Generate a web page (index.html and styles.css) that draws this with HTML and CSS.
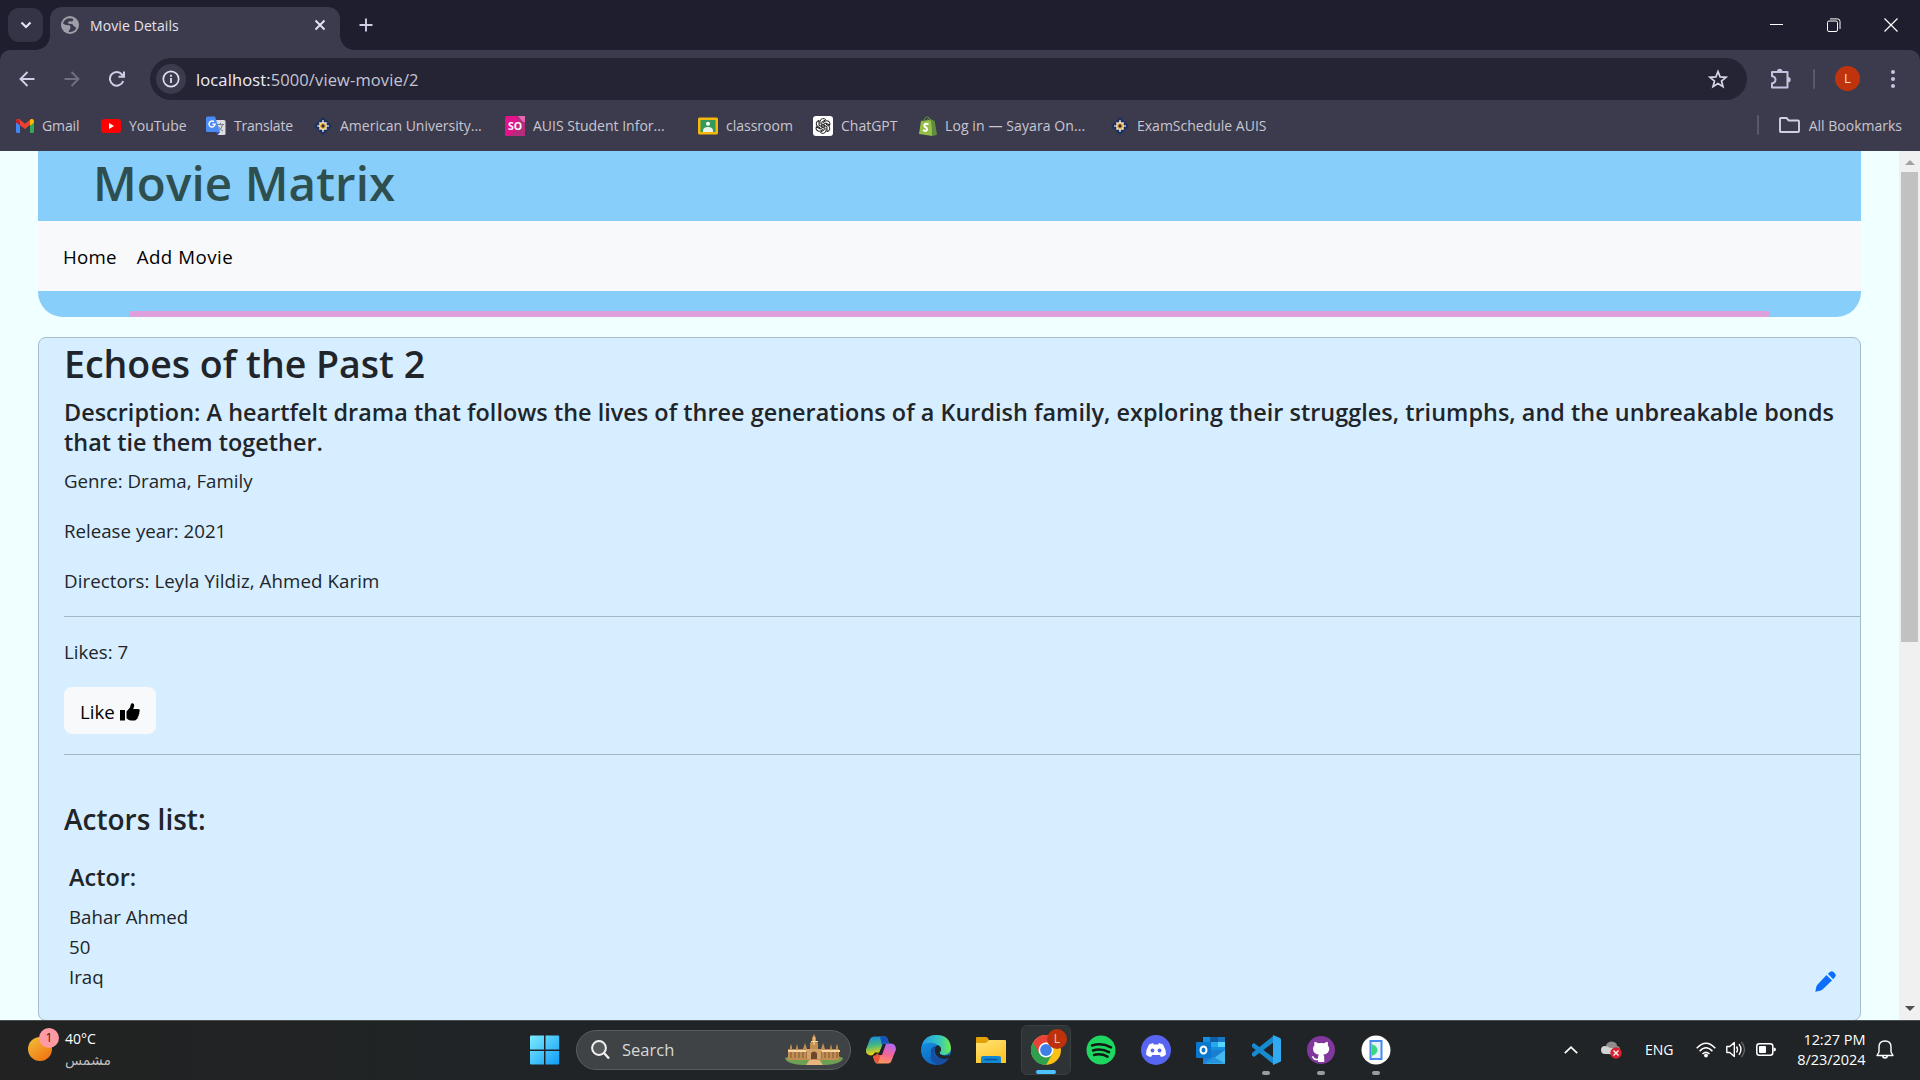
FILE: index.html
```html
<!DOCTYPE html>
<html lang="en">
<head>
<meta charset="utf-8">
<title>Movie Details</title>
<link rel="stylesheet" href="styles.css">
</head>
<body>
<div class="screen">
  <header class="tabstrip">
    <div class="tab-menu"><svg width="12" height="8" viewBox="0 0 12 8"><path d="M1.500 1.500 6 6l4.500-4.500" fill="none" stroke="#e6e4f0" stroke-width="2.200"/></svg></div>
    <div class="tab">
      <svg class="globe" width="18" height="18" viewBox="0 0 18 18"><circle cx="9" cy="9" r="9" fill="#9d9fa8"/><path d="M8 2.200C5 2.500 2.600 4.800 2 7.500L4.500 9l4 .2 1.200 2-1 2.200-1.200 2.500c3.500.5 6.500-1 7.800-4l-2.500-1.800-1.600-2.100-3.500-.2-.9-1.600 1.500-1 2.700.3 1.500-1.500-1-1.500z" fill="#3c3b4d"/><path d="M9 6.500 13 7l2.500-1.500" stroke="#9d9fa8" fill="none"/></svg>
      <span class="tab-title">Movie Details</span>
      <svg class="tab-close" width="12" height="12" viewBox="0 0 12 12"><path d="m1.500 1.500 9 9m0-9-9 9" stroke="#e6e4f0" stroke-width="1.900"/></svg>
    </div>
    <svg class="new-tab" width="14" height="14" viewBox="0 0 14 14"><path d="M7 .5v13M.5 7h13" stroke="#d1cde6" stroke-width="1.900"/></svg>
    <div class="window-controls">
      <svg width="14" height="14" viewBox="0 0 14 14"><path d="M0 6.500h13" stroke="#fff"/></svg>
      <svg width="14" height="14" viewBox="0 0 14 14"><rect x=".5" y="3" width="10" height="10.500" rx="1.500" fill="none" stroke="#fff"/><path d="M3 .9h7.500A2.500 2.500 0 0 1 13 3.400V11" fill="none" stroke="#fff"/></svg>
      <svg width="14" height="14" viewBox="0 0 14 14"><path d="m.5.500 13 13m0-13-13 13" stroke="#fff" stroke-width="1.200"/></svg>
    </div>
  </header>

  <div class="toolbar">
    <svg width="16" height="16" viewBox="0 0 16 16"><path d="M15.500 8H2M8.500 1 1.500 8l7 7" fill="none" stroke="#d1cde6" stroke-width="1.900"/></svg>
    <svg width="16" height="16" viewBox="0 0 16 16"><path d="M.5 8H14M7.500 1l7 7-7 7" fill="none" stroke="#716f83" stroke-width="1.900"/></svg>
    <svg width="16" height="16" viewBox="0 0 16 16"><path d="M14.200 10A6.800 6.800 0 1 1 13 3.500l2 2.200M15 .5v5.300H9.500" fill="none" stroke="#d1cde6" stroke-width="2"/></svg>
    <div class="omnibox">
      <div class="site-info"><svg width="18" height="18" viewBox="0 0 18 18"><circle cx="9" cy="9" r="7.700" fill="none" stroke="#dfdcec" stroke-width="1.700"/><path d="M9 8v5M9 4.800v1.900" stroke="#dfdcec" stroke-width="1.800"/></svg></div>
      <span class="url"><b>localhost:</b>5000/view-movie/2</span>
      <svg class="star" width="20" height="20" viewBox="0 0 20 20"><path d="m10 2.500 2.100 5.400 5.900.4-4.500 3.700 1.500 5.700-5-3.200-5 3.200L6.500 12 2 8.300l5.900-.4z" fill="none" stroke="#d8d5e5" stroke-width="1.700"/></svg>
    </div>
    <svg class="puzzle" width="22" height="22" viewBox="0 0 22 22"><path d="M2 4h15.500v15.500H2v-4.200a3.500 3.500 0 0 0 0-7z" fill="none" stroke="#c7c2df" stroke-width="2" stroke-linejoin="round"/><path d="M7 3.500a2.700 2.700 0 0 1 5.400 0zM18 9a2.700 2.700 0 0 1 0 5.400z" fill="#c7c2df"/></svg>
    <span class="rule"></span>
    <span class="avatar">L</span>
    <svg width="4" height="18" viewBox="0 0 4 18"><g fill="#c7c2df"><circle cx="2" cy="2" r="2"/><circle cx="2" cy="9" r="2"/><circle cx="2" cy="16" r="2"/></g></svg>
  </div>

  <nav class="bookmarks">
    <div class="bookmark gmail"><svg width="18" height="20" viewBox="0 0 18 20"><path d="M0 5.500h4V17H1.200Q0 17 0 15.800z" fill="#4285f4"/><path d="M14 5.500h4v10.300q0 1.200-1.200 1.200H14z" fill="#34a853"/><path d="M0 5V4.500Q0 3 1.500 3H3l6 4.800L15 3v5l-6 5-5-3.800z" fill="#ea4335"/><path d="M14 4l1.300-1Q18 2.800 18 5v1.500l-4 3.200z" fill="#fbbc04"/><path d="M0 5q0-1.500 1.500-2L4 5v4.500L0 6.500z" fill="#c5221f"/></svg><span>Gmail</span></div>
    <div class="bookmark youtube"><svg width="20" height="20" viewBox="0 0 20 20"><rect y="3" width="20" height="14" rx="3.500" fill="#f00"/><path d="m8 7 5 3-5 3z" fill="#fff"/></svg><span>YouTube</span></div>
    <div class="bookmark translate"><svg width="20" height="20" viewBox="0 0 20 20"><path d="M9 4h9q1.500 0 1.500 1.500v12q0 1.500-1.500 1.500h-6z" fill="#dcdde0"/><path d="M10 16h4l-2.500 3.500z" fill="#3c56b0"/><path d="M11 8.500h7M14.500 7v1.500m2 0q-.5 4-4 6.500m0-4.500q1.500 3.500 4.500 4.500" stroke="#75818a" fill="none"/><path d="M1.500.5h7.500l5 15.500H1.500Q0 16 0 14.500V2Q0 .5 1.500.5z" fill="#4b8bf5"/><path d="M8 5.800a3 3 0 1 0 1 2.500H6.500" fill="none" stroke="#fff" stroke-width="1.400"/></svg><span>Translate</span></div>
    <div class="bookmark american"><svg width="18" height="18" viewBox="0 0 18 18"><path d="m9 0 9 9-9 9-9-9z" fill="#1b2f5c"/><path d="M9 3V15M3 9h12M5.300 5.300l7.400 7.400m0-7.400-7.400 7.400" stroke="#b9c3d6" stroke-width="1.700"/><circle cx="9" cy="9" r="3.900" fill="#f4e3bd"/><circle cx="9" cy="9" r="2.300" fill="#2b2a38" stroke="#f0b03c" stroke-width="1.300"/></svg><span>American University...</span></div>
    <div class="bookmark auis"><svg width="20" height="20" viewBox="0 0 20 20"><rect width="20" height="20" rx="1.500" fill="#e4128b"/><path d="M12 0h8v20H4l9-8z" fill="#b52c7d"/><path d="m13 0 5 6h2V0z" fill="#e468ae"/><text x="10" y="14.200" text-anchor="middle" class="so">SO</text></svg><span>AUIS Student Infor...</span></div>
    <div class="bookmark classroom"><svg width="20" height="20" viewBox="0 0 20 20"><rect y="1.500" width="20" height="17" rx="1.500" fill="#f6b90b"/><rect x="2.500" y="4" width="15" height="12" fill="#34995a"/><circle cx="10" cy="7.800" r="2" fill="#fff"/><path d="M5 14.500q0-3.500 5-3.500t5 3.500V16H5z" fill="#e8f3ea"/></svg><span>classroom</span></div>
    <div class="bookmark chatgpt"><svg width="20" height="20" viewBox="0 0 20 20"><rect width="20" height="20" rx="3" fill="#fff"/><g fill="none" stroke="#222" stroke-width="1"><path id="petal" d="M7 8.300V5.500a3.200 3.200 0 0 1 5.700-1.700L8.800 6.100v5.200"/><use href="#petal" transform="rotate(60 10 10)"/><use href="#petal" transform="rotate(120 10 10)"/><use href="#petal" transform="rotate(180 10 10)"/><use href="#petal" transform="rotate(240 10 10)"/><use href="#petal" transform="rotate(300 10 10)"/></g></svg><span>ChatGPT</span></div>
    <div class="bookmark sayara"><svg width="18" height="20" viewBox="0 0 18 20"><path d="M2 5 12.500 3.500 13.500 20 0 18z" fill="#95bf47"/><path d="m12.500 3.500 3.200 1.500L18 18.800 13.500 20z" fill="#5e8e3e"/><path d="M4.500 6Q5.500.7 8.500.8 11 1 11 5M7.500 5Q9 .8 11.500 3.500" fill="none" stroke="#5e8e3e"/><path d="M9.500 8.200Q5.500 7 5.300 9.500c0 2 3 1.800 2.800 3.800-.1 2-2.500 2-4 .7" fill="none" stroke="#fff" stroke-width="2"/></svg><span>Log in — Sayara On...</span></div>
    <div class="bookmark exam"><svg width="18" height="18" viewBox="0 0 18 18"><path d="m9 0 9 9-9 9-9-9z" fill="#1b2f5c"/><path d="M9 3V15M3 9h12M5.300 5.300l7.400 7.400m0-7.400-7.400 7.400" stroke="#b9c3d6" stroke-width="1.700"/><circle cx="9" cy="9" r="3.900" fill="#f4e3bd"/><circle cx="9" cy="9" r="2.300" fill="#2b2a38" stroke="#f0b03c" stroke-width="1.300"/></svg><span>ExamSchedule AUIS</span></div>
    <div class="all-bookmarks"><span class="rule"></span><svg width="21" height="16" viewBox="0 0 21 16"><path d="M1 2q0-1 1-1h5.500l2.300 2.500H19q1 0 1 1V14q0 1-1 1H2q-1 0-1-1z" fill="none" stroke="#d2cfe0" stroke-width="1.900"/></svg><span class="label">All Bookmarks</span></div>
  </nav>

  <div class="viewport">
    <main class="page">
      <div class="banner">
        <h1>Movie Matrix</h1>
        <div class="menu"><span class="home">Home</span><span class="add">Add Movie</span></div>
        <div class="accent"></div>
      </div>
      <section class="card">
        <h2>Echoes of the Past 2</h2>
        <h5 class="description">Description: A heartfelt drama that follows the lives of three generations of a Kurdish family, exploring their struggles, triumphs, and the unbreakable bonds<br>that tie them together.</h5>
        <p>Genre: Drama, Family</p>
        <p>Release year: 2021</p>
        <p class="directors">Directors: Leyla Yildiz, Ahmed Karim</p>
        <hr>
        <p>Likes: 7</p>
        <button class="like">Like <svg width="20" height="18" viewBox="0 0 20 18"><path d="M0 7h5v10.500H0z"/><path d="M6.500 8.500 10 4.500l.8-3Q11.200 0 12.700.2q1.800.5 1.500 2.800l-1 3h5q1.800.2 1.600 2-.1.700-.6 1 .8 1.500-.5 2.500.5 1.500-.8 2.300.2 1.700-1.200 2.300-.3 1.300-2 1.400h-3.500q-1.800 0-3.200-1L6.500 15.200z"/></svg></button>
        <hr>
        <h4>Actors list:</h4>
        <div class="actor">
          <div><h5>Actor:</h5><div>Bahar Ahmed</div><div>50</div><div>Iraq</div></div>
          <svg class="pencil" width="21" height="21" viewBox="0 0 21 21"><path d="M11.500 4 17 9.500 7.500 18.500Q6.500 19.500 5 19.800L.3 20.700 1.300 16Q1.500 14.700 2.600 13.400zM12.800 2.800 15 1q1.700-1.500 3.500 0l1.500 1.500q1.600 1.800 0 3.500l-1.800 2.200z" fill="#0d6efd"/></svg>
        </div>
      </section>
    </main>
    <div class="scrollbar">
      <svg width="10" height="5" viewBox="0 0 10 5"><path d="m0 5 5-5 5 5z" fill="#a3a3a3"/></svg>
      <div class="thumb"></div>
      <svg width="10" height="5" viewBox="0 0 10 5"><path d="m0 0 5 5 5-5z" fill="#505050"/></svg>
    </div>
  </div>

  <footer class="taskbar">
    <div class="weather">
      <div class="sun"><span class="count">1</span></div>
      <div class="weather-text"><span>40°C</span><span class="arabic" lang="ar" dir="rtl">مشمس</span></div>
    </div>
    <div class="apps">
      <div class="app windows"><svg width="30" height="30" viewBox="0 0 30 30"><defs><linearGradient id="win" x2="1" y2="1" gradientUnits="objectBoundingBox"><stop stop-color="#7cecff"/><stop offset="1" stop-color="#119bf5"/></linearGradient></defs><path d="M0 1.500Q0 .5 1 .5h13v14H0zM15.500.5h12.700q1 0 1 1v13H15.500zM0 16h14v13.500H1q-1 0-1-1zM15.500 16h13.700v12.500q0 1-1 1H15.500z" fill="url(#win)"/></svg></div>
      <div class="search">
        <svg width="19" height="20" viewBox="0 0 19 20"><circle cx="8" cy="8" r="6.900" fill="#555a5d" stroke="#f3f3f3" stroke-width="2"/><path d="m13 13 5 5.500" stroke="#f3f3f3" stroke-width="2.300"/></svg>
        <span>Search</span>
        <svg class="palace" width="58" height="32" viewBox="0 0 58 32"><path d="M0 24q8-4 29-3 21-1 29 3-1 6-18 7H18Q1 30 0 24z" fill="#6ca054"/><path d="m25 25-4 6h17l-4-6z" fill="#e6b580"/><path d="M3 15h2v-2l1-3 1 3v2h4v-1l1-4 1 4v1h5l2-6 2 6h3V9l2-2V4l2-4 2 4v3l2 2v6h3l2-6 2 6h5v-1l1-4 1 4v1h4v-2l1-3 1 3v2h1v11H3z" fill="#c38e52"/><path d="M3 16h52v2H3zM23 15h13v2H23zM26 7h7v1h-7z" fill="#f3d4a1"/><path d="M6 18v6m4-6v6m4-6v6m4-6v6m4-7v8m14-8v8m4-7v6m4-6v6m4-6v6m4-6v6" stroke="#8d643f" stroke-width="1.300"/><path d="M22 15h14v10H22z" fill="#d3a36a"/><path d="M26 25v-6q3-3 6 0v6z" fill="#6c472d"/><path d="M29 3v8" stroke="#ffe3a4"/></svg>
      </div>
      <div class="app"><svg width="30" height="28" viewBox="0 0 30 28"><defs><linearGradient id="ca" x2=".2" y2="1"><stop stop-color="#1686e8"/><stop offset=".5" stop-color="#42b785"/><stop offset="1" stop-color="#ffd500"/></linearGradient><linearGradient id="cb" x1=".6" x2=".3" y2="1"><stop stop-color="#b368ee"/><stop offset=".5" stop-color="#f66597"/><stop offset="1" stop-color="#ff9b55"/></linearGradient></defs><path d="M8 .5h11q2 .3 3 4l1 3h-4q-2 0-3 3l-2 6H9q-2 3-4 3-6-1-5-6L4 3Q5 .5 8 .5z" fill="url(#ca)"/><path d="M22 27.500H11q-2-.3-3-4l-1-3h3q3 0 4-3l3-8q1-2 3-2h5q5 .5 5 6l-4 10q-1 4-4 4z" fill="url(#cb)"/><path d="M14 .5h5q2 .5 3 4l1 3h-4q-2 0-3 2z" fill="#1750c3"/><path d="m7 20 1 3q1 4 4 4.500l3-10h-4q-1 2-4 2.500z" fill="#e8573c"/><path d="M17 8h3l-4 11h-4z" fill="#20242a"/></svg></div>
      <div class="app"><svg width="30" height="30" viewBox="0 0 30 30"><defs><linearGradient id="ea"><stop stop-color="#219be8"/><stop offset=".6" stop-color="#38c7bf"/><stop offset="1" stop-color="#71eb4c"/></linearGradient><linearGradient id="eb" y2="1" x2=".6"><stop stop-color="#1899e9"/><stop offset="1" stop-color="#0a61bd"/></linearGradient></defs><circle cx="15" cy="15" r="15" fill="url(#eb)"/><path d="M1 10Q4 0 15 0q14 0 15 13 0 6-7 7-5 0-5-3 3-3 0-6-7-6-17-1z" fill="url(#ea)"/><path d="M10 20Q8 12 15 11q-4 5 0 10 5 5 13 2-4 7-11 7-9-4-7-10z" fill="#164ea4"/><path d="M15 11q3-2 5 2v3q-2 1-1 3 4 3 9 1l2 2-2 1q-8 3-13-3-3-5 0-9z" fill="#20262b"/></svg></div>
      <div class="app"><svg width="30" height="28" viewBox="0 0 30 28"><path d="M0 2Q0 1 1 1h9q2 0 3 3l-2 5H0z" fill="#e3a108"/><defs><linearGradient id="fo" y2="1" x2=".5"><stop stop-color="#ffe277"/><stop offset="1" stop-color="#ffc629"/></linearGradient></defs><path d="M0 7h10l3-3h16q1 0 1 1v22H0z" fill="url(#fo)"/><path d="M5 27v-5q0-2 2-2h16q2 0 2 2v5z" fill="#1287d3"/><path d="M8.500 23.500h13" stroke="#075397" stroke-width="1.500"/></svg></div>
      <div class="app active"><svg width="30" height="30" viewBox="0 0 30 30"><circle cx="15" cy="15" r="15" fill="#fbc116"/><path d="M15 15 2 7.500A15 15 0 0 0 15 30l6.500-11.200z" fill="#2da14e"/><path d="M2 7.500A15 15 0 0 1 28 7.500H15L8.500 19z" fill="#e8433a"/><circle cx="15" cy="15" r="7.500" fill="#fff"/><circle cx="15" cy="15" r="5.900" fill="#3f7fe8"/></svg><span class="profile">L</span></div>
      <div class="app"><svg width="30" height="30" viewBox="0 0 30 30"><circle cx="15" cy="15" r="14.500" fill="#1ed760"/><path d="M6 10.500q10-3 19 1.800M7 15.500q8-2.500 16 1.700M8 20q7-2 13.500 1.600" fill="none" stroke="#101913" stroke-width="2.500" stroke-linecap="round"/></svg></div>
      <div class="app"><svg width="30" height="30" viewBox="0 0 30 30"><circle cx="15" cy="15" r="15" fill="#5865f2"/><path d="m12 8 .8 1.500h4.400L18 8l4 1.500q3 5 3 10-2 2-5 2.500l-1.200-2h-7.600L10 22q-3-.5-5-2.500 0-5 3-10z" fill="#fff"/><ellipse cx="11.500" cy="15.500" rx="1.900" ry="2.100" fill="#5865f2"/><ellipse cx="18.500" cy="15.500" rx="1.900" ry="2.100" fill="#5865f2"/></svg></div>
      <div class="app"><svg width="30" height="28" viewBox="0 0 30 28"><path d="M7 1h22v16H7z" fill="#1490df"/><path d="M14 1h8v5h-8z" fill="#0f5fa7"/><path d="M22 1h7v5h-7z" fill="#1777c5"/><path d="M22 6h7v5h-7z" fill="#56d7ff"/><path d="M14 6h8v5h-8z" fill="#29a9ec"/><path d="M7 14h22v13q0 1-1 1H7z" fill="#1a7fd1"/><path d="M29 14v13q0 1-1 1H10z" fill="#45b9ef"/><path d="m18 21 11 6.500H7z" fill="#2495dd"/><rect y="6" width="15" height="16" rx="1" fill="#0877cd"/><ellipse cx="7.500" cy="14" rx="3" ry="3.500" fill="none" stroke="#fff" stroke-width="2"/></svg></div>
      <div class="app running"><svg width="30" height="30" viewBox="0 0 30 30"><path d="M1 9.500 3 8l20 15v6.500L1 12z" fill="#168bd2"/><path d="M1 20.500 3 22 23 7V.5L1 18z" fill="#168bd2"/><path d="M22 0 29 3q1 .5 1 1.500v21q0 1-1 1.500l-7 3z" fill="#31aaf2"/></svg></div>
      <div class="app running"><svg width="28" height="28" viewBox="0 0 28 28"><circle cx="14" cy="14" r="14" fill="#81379b"/><path d="M11 23.300q-4.200.9-5.500-3" fill="none" stroke="#fff" stroke-width="1.500"/><path d="M11 26v-5q0-1.500 1-2.200-6-.8-6-6 0-2 1.400-3.500-.5-1.800.2-3.500 1.500 0 3.700 1.500a12 12 0 0 1 5.600 0q2.200-1.500 3.700-1.500.7 1.700.2 3.500 1.400 1.500 1.400 3.500 0 5.200-6 6 1 .7 1 2.200v5z" fill="#fff"/></svg></div>
      <div class="app running"><svg width="30" height="30" viewBox="0 0 30 30"><circle cx="15" cy="15" r="14.500" fill="#fff"/><rect x="9.500" y="6" width="11" height="18" fill="#e7f0fd" stroke="#4788ef" stroke-width="2"/><path d="M10.500 9q6 2 6 6t-6 6z" fill="#3bd681"/></svg></div>
    </div>
    <div class="tray">
      <svg class="up" width="14" height="8" viewBox="0 0 14 8"><path d="m.8 7.200 6.200-6 6.200 6" fill="none" stroke="#fff" stroke-width="1.700"/></svg>
      <svg class="cloud" width="21" height="18" viewBox="0 0 21 18"><path d="M5 4Q8-1 13 1q3 1 3 4 3 0 3 4l-10 5z" fill="#8e8e8e"/><path d="M4 13q-4 0-4-4t4-4q3 0 5 2 3-1 5 2v4z" fill="#d2d2d2"/><circle cx="15" cy="12" r="5.700" fill="#d8232e"/><path d="m12.500 9.500 5 5m0-5-5 5" stroke="#fff" stroke-width="1.300"/></svg>
      <span class="eng">ENG</span>
      <svg class="wifi" width="20" height="16" viewBox="0 0 20 16"><g fill="none" stroke="#fff" stroke-width="1.500"><path d="M.7 6.300q9.300-10 18.600 0M3.600 9.300q6.400-7 12.800 0M6.500 12q3.500-3.500 7 0"/></g><circle cx="10" cy="13.500" r="1.900" fill="#fff"/></svg>
      <svg class="volume" width="20" height="17" viewBox="0 0 20 17"><path d="M.8 5.500h3l4.500-4v14l-4.500-4h-3z" fill="none" stroke="#fff" stroke-width="1.400" stroke-linejoin="round"/><path d="M10.500 5.500q2 3 0 6M13 3.200q4 5.300 0 10.600" fill="none" stroke="#fff" stroke-width="1.400"/><path d="M15.500 1q6 7.500 0 15" fill="none" stroke="#666a6c" stroke-width="1.300"/></svg>
      <svg class="battery" width="20" height="13" viewBox="0 0 20 13"><rect x=".8" y=".8" width="16" height="11.400" rx="2.500" fill="none" stroke="#fff" stroke-width="1.500"/><rect x="3" y="3" width="7" height="7" rx="1" fill="#fff"/><path d="M17.500 4.500q2.500 0 2.500 2t-2.500 2z" fill="#fff"/></svg>
      <div class="clock"><span>12:27 PM</span><span class="date">8/23/2024</span></div>
      <svg class="bell" width="18" height="19" viewBox="0 0 18 19"><path d="M3 12V7Q3 1 9 1t6 6v5l2 3.500H1zM6.500 16Q7 18 9 18t2.500-2" fill="none" stroke="#fff" stroke-width="1.400" stroke-linejoin="round"/></svg>
    </div>
  </footer>
</div>
</body>
</html>
```
FILE: styles.css
```css
* { box-sizing: border-box; }
body { margin: 0; overflow: hidden; font-family: "Open Sans", "Noto Sans", sans-serif; }
svg { display: block; flex: none; }
span { white-space: nowrap; }
.screen { width: 1920px; height: 1080px; display: flex; flex-direction: column; background: #1f1e2f; }

.tabstrip { height: 50px; display: flex; align-items: center; padding-left: 8px; background: #1f1e2f; color: #e6e4f0; }
.tab-menu { width: 35px; height: 34px; border-radius: 11px; background: #353446; display: flex; align-items: center; justify-content: center; }
.tab { position: relative; width: 290px; height: 43px; margin: 7px 0 0 7px; padding: 0 14px 7px 11px; display: flex; align-items: center; background: #3c3b4d; border-radius: 12px 12px 0 0; }
.tab::before, .tab::after { content: ""; position: absolute; bottom: 0; width: 14px; height: 14px; }
.tab::before { left: -14px; background: radial-gradient(circle at 0 0, transparent 13.500px, #3c3b4d 14px); }
.tab::after { right: -14px; background: radial-gradient(circle at 100% 0, transparent 13.500px, #3c3b4d 14px); }
.tab-title { margin-left: 11px; font-size: 14px; letter-spacing: .1px; }
.tab-close { margin-left: auto; }
.new-tab { margin-left: 19px; }
.window-controls { display: flex; gap: 43px; margin: 0 22px 0 auto; }

.toolbar { height: 57px; display: flex; align-items: center; padding: 0 25px 0 19px; background: #3c3b4d; border-radius: 10px 10px 0 0; }
.toolbar > svg + svg { margin-left: 29px; }
.omnibox { width: 1597px; height: 42px; margin-left: 25px; padding: 0 19px 0 6px; display: flex; align-items: center; background: #242435; border-radius: 21px; }
.site-info { width: 30px; height: 30px; border-radius: 50%; background: #3c3b4d; display: flex; align-items: center; justify-content: center; }
.url { margin-left: 10px; padding-top: 1px; font-size: 16.500px; letter-spacing: .12px; color: #c5c3d2; }
.url b { font-weight: 400; color: #efedf8; }
.star { margin-left: auto; }
.puzzle { margin-left: 23px; }
.rule { width: 2px; height: 20px; background: #5a586c; border-radius: 1px; }
.toolbar .rule { margin-left: 21px; }
.avatar { width: 25px; height: 25px; margin: 0 31px 0 20px; border-radius: 50%; background: #c0340d; color: #f5ded7; font: 13px/25px "Open Sans", sans-serif; text-align: center; }

.bookmarks { height: 44px; display: grid; grid-template-columns: 85px 105px 108px 191px 193px 115px 106px 192px 230px 1fr; padding: 0 18px 8px 16px; background: #3c3b4d; color: #c8c6d1; font-size: 14px; }
.bookmark { display: flex; align-items: center; gap: 8px; }
.bookmark svg { margin-top: 2px; }
.gmail { letter-spacing: -.1px; }
.translate { letter-spacing: -.2px; }
.so { font: 700 10.500px "Open Sans", sans-serif; fill: #fff; }
.sayara { letter-spacing: .1px; }
.all-bookmarks { display: flex; align-items: center; justify-content: flex-end; }
.all-bookmarks svg { margin: 0 9px 0 20px; }

.viewport { height: 869px; display: flex; overflow: hidden; background: azure; }
.page { flex: 1; padding: 0 38px; color: #212529; font-size: 18.700px; line-height: 30px; }
h1, h2, h4, h5, p { margin: 0; }
h1, h2, h4, h5 { font-weight: 600; }
.banner { height: 166px; display: flex; flex-direction: column; background: lightskyblue; border-radius: 0 0 25px 25px; }
.banner h1 { height: 70px; padding-left: 55px; color: darkslategray; font-size: 47.500px; letter-spacing: .1px; line-height: 63px; }
.menu { height: 70px; display: flex; align-items: center; gap: 20px; padding: 2px 25px 0; background: #f8f9fa; color: #000; }
.home { letter-spacing: .2px; }
.add { letter-spacing: .5px; }
.accent { width: 90%; height: 6px; margin: auto auto 0; background: plum; border-radius: 3px; }
.card { height: 684px; margin-top: 20px; padding: 2px 0 0 25px; background: #d6eeff; border: 1px solid #a9bdc9; border-radius: 8px; }
.card h2 { font-size: 37.500px; line-height: 48px; margin-bottom: 9px; }
.card h5 { font-size: 23.400px; letter-spacing: .03px; line-height: 30px; margin-bottom: 10px; }
.card .description { margin-bottom: 9px; }
.card p { margin-bottom: 20px; }
.directors { letter-spacing: .08px; }
hr { height: 1px; border: 0; margin: 0 0 20px; background: #a3b7c4; }
.like { display: flex; align-items: center; gap: 5px; width: 92px; height: 47px; padding: 2px 16px 0; margin-bottom: 20px; border: 0; border-radius: 8px; background: #f8f9fa; color: #000; font: 18.700px "Open Sans", sans-serif; }
.card h4 { margin-top: 46px; font-size: 28px; line-height: 36px; }
.actor { display: flex; justify-content: space-between; align-items: flex-end; padding: 25px 24px 0 5px; }
.scrollbar { width: 21px; display: flex; flex-direction: column; align-items: center; background: #f0f0f0; padding: 9px 0; }
.scrollbar .thumb { width: 17px; height: 470px; margin: 7px 0 auto; background: #c1c1c1; }

.taskbar { height: 60px; display: flex; background: #202426; border-top: 1px solid #484e50; color: #fff; font-size: 14px; }
.weather { width: 500px; display: flex; padding-left: 28px; background: linear-gradient(90deg, #222, #202426); }
.sun { position: relative; width: 24px; height: 24px; margin-top: 16px; border-radius: 50%; background: linear-gradient(145deg, #eec23a, #f26a0c); }
.count { position: absolute; left: 11px; top: -9px; width: 20px; height: 20px; border-radius: 50%; background: #ff99a4; color: #222; font-size: 12px; line-height: 20px; text-align: center; }
.weather-text { display: flex; flex-direction: column; margin: 8px 0 0 13px; line-height: 20px; }
.arabic { color: #bebebe; font: 14px/22px "DejaVu Sans", sans-serif; }
.apps { width: 901px; display: flex; gap: 5px; align-items: center; padding: 0 0 2px 19px; }
.app { position: relative; width: 50px; height: 50px; display: flex; align-items: center; justify-content: center; border-radius: 6px; }
.windows { padding-left: 2px; }
.active { background: #2e3336; border: 1px solid #3a3f42; }
.active::after, .running::after { content: ""; position: absolute; bottom: 0; width: 20px; height: 4px; border-radius: 2px; background: #4cc2ff; }
.running::after { width: 8px; background: #999c9e; }
.profile { position: absolute; left: 25px; top: 3px; width: 20px; height: 20px; border-radius: 50%; background: #bd320d; color: #f2cbbc; font-size: 12px; line-height: 20px; text-align: center; }
.search { width: 275px; height: 40px; display: flex; align-items: center; padding: 0 7px 0 14px; margin-left: 2px; background: #404345; border: 1px solid #5a5d5f; border-radius: 20px; color: #d8d8d8; font-size: 16.500px; }
.search span { margin-left: 12px; }
.palace { margin-left: auto; }
.tray { flex: 1; display: flex; align-items: center; padding: 0 0 2px 163px; }
.cloud { margin-left: 23px; }
.eng { margin-left: 23px; }
.wifi { margin-left: 22px; }
.volume, .battery { margin-left: 10px; }
.clock { width: 70px; margin-left: 20px; display: flex; flex-direction: column; align-items: flex-end; font-size: 14.500px; letter-spacing: -.05px; line-height: 20px; }
.bell { margin-left: 10px; }
```
